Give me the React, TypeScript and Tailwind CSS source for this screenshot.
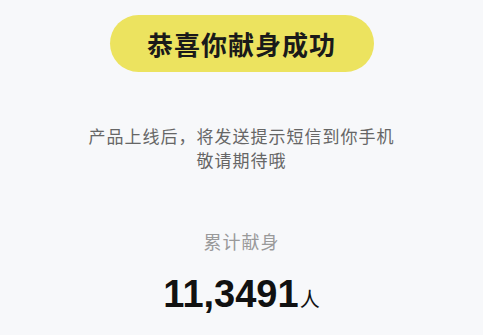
import React from "react";

export default function App() {
  const cjk = { fontFamily: '"Noto Sans CJK SC", "Noto Sans", sans-serif' };
  return (
    <div
      className="w-full h-[335px] bg-[#f7f8fa] flex flex-col items-center overflow-hidden"
      style={cjk}
    >
      <div className="mt-[15px] w-[264px] h-[57px] rounded-full bg-[#ece35f] flex items-center justify-center">
        <span className="text-[26px] font-bold text-[#1a1a1a] tracking-[1px] leading-none">
          恭喜你献身成功
        </span>
      </div>
      <div className="mt-[52px] flex flex-col items-center text-[17px] leading-[24px] tracking-[1px] text-[#666666]">
        <p>产品上线后，将发送提示短信到你手机</p>
        <p>敬请期待哦</p>
      </div>
      <p className="mt-[57px] text-[18px] leading-[24px] tracking-[1px] text-[#9a9a9a]">
        累计献身
      </p>
      <div className="mt-[22px] flex items-baseline text-[#111111]">
        <span
          className="text-[38px] font-bold leading-[38px]"
          style={{ fontFamily: '"Liberation Sans", Arial, sans-serif' }}
        >
          11,3491
        </span>
        <span className="text-[20px] leading-none ml-[1px]">人</span>
      </div>
    </div>
  );
}
